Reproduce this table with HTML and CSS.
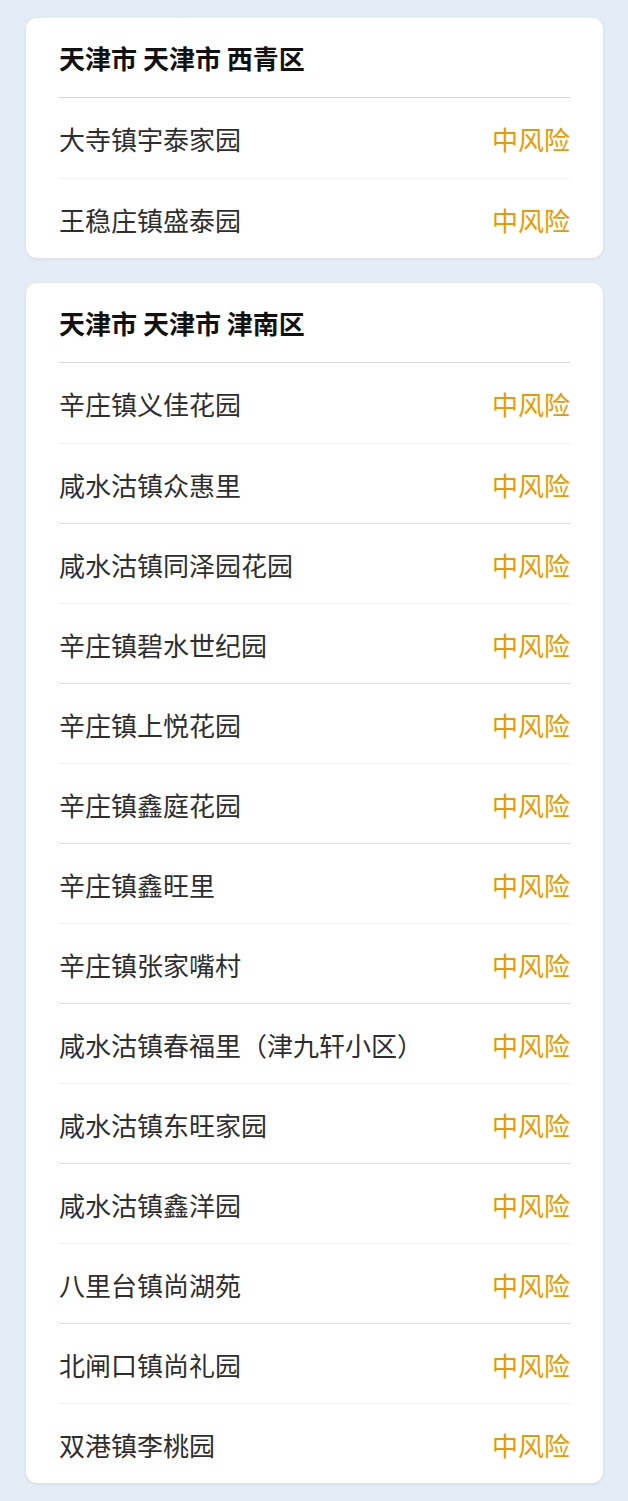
FILE: index.html
```html
<!DOCTYPE html>
<html lang="zh-CN">
<head>
<meta charset="utf-8">
<link rel="stylesheet" href="styles.css">
</head>
<body>
<div class="page">
  <section class="card">
    <div class="card-head">天津市 天津市 西青区</div>
    <div class="row"><span class="name">大寺镇宇泰家园</span><span class="risk">中风险</span></div>
    <div class="row"><span class="name">王稳庄镇盛泰园</span><span class="risk">中风险</span></div>
  </section>
  <section class="card">
    <div class="card-head">天津市 天津市 津南区</div>
    <div class="row"><span class="name">辛庄镇义佳花园</span><span class="risk">中风险</span></div>
    <div class="row"><span class="name">咸水沽镇众惠里</span><span class="risk">中风险</span></div>
    <div class="row"><span class="name">咸水沽镇同泽园花园</span><span class="risk">中风险</span></div>
    <div class="row"><span class="name">辛庄镇碧水世纪园</span><span class="risk">中风险</span></div>
    <div class="row"><span class="name">辛庄镇上悦花园</span><span class="risk">中风险</span></div>
    <div class="row"><span class="name">辛庄镇鑫庭花园</span><span class="risk">中风险</span></div>
    <div class="row"><span class="name">辛庄镇鑫旺里</span><span class="risk">中风险</span></div>
    <div class="row"><span class="name">辛庄镇张家嘴村</span><span class="risk">中风险</span></div>
    <div class="row"><span class="name">咸水沽镇春福里（津九轩小区）</span><span class="risk">中风险</span></div>
    <div class="row"><span class="name">咸水沽镇东旺家园</span><span class="risk">中风险</span></div>
    <div class="row"><span class="name">咸水沽镇鑫洋园</span><span class="risk">中风险</span></div>
    <div class="row"><span class="name">八里台镇尚湖苑</span><span class="risk">中风险</span></div>
    <div class="row"><span class="name">北闸口镇尚礼园</span><span class="risk">中风险</span></div>
    <div class="row"><span class="name">双港镇李桃园</span><span class="risk">中风险</span></div>
  </section>
</div>
</body>
</html>
```

FILE: styles.css
```css
html, body {
  margin: 0;
  padding: 0;
  background: #e4ecf5;
}
body {
  font-family: "Noto Sans CJK SC", "Noto Sans", sans-serif;
}
.page {
  display: flex;
  flex-direction: column;
  gap: 25px;
  padding: 18px 25px 16px 26px;
}
.card {
  background: #ffffff;
  border-radius: 11px;
  padding: 0 33px;
  box-shadow: 0 1px 3px rgba(120, 140, 170, 0.18);
}
.card-head {
  font-size: 26px;
  line-height: 26px;
  font-weight: 700;
  color: #111111;
  padding: 27px 0 26px;
  border-bottom: 1px solid #d9d9d9;
}
.row {
  display: flex;
  justify-content: space-between;
  align-items: center;
  height: 80px;
  font-size: 26px;
  line-height: 26px;
  padding-top: 2px;
  box-sizing: border-box;
}
.row + .row {
  border-top: 1px solid #f0f0f0;
}
.row:nth-child(even) + .row {
  border-top-color: #f2f2f2;
}
.row:nth-child(odd) + .row {
  border-top-color: #dedede;
}
.name {
  color: #2e2e2e;
}
.risk {
  color: #e89a00;
}
```
